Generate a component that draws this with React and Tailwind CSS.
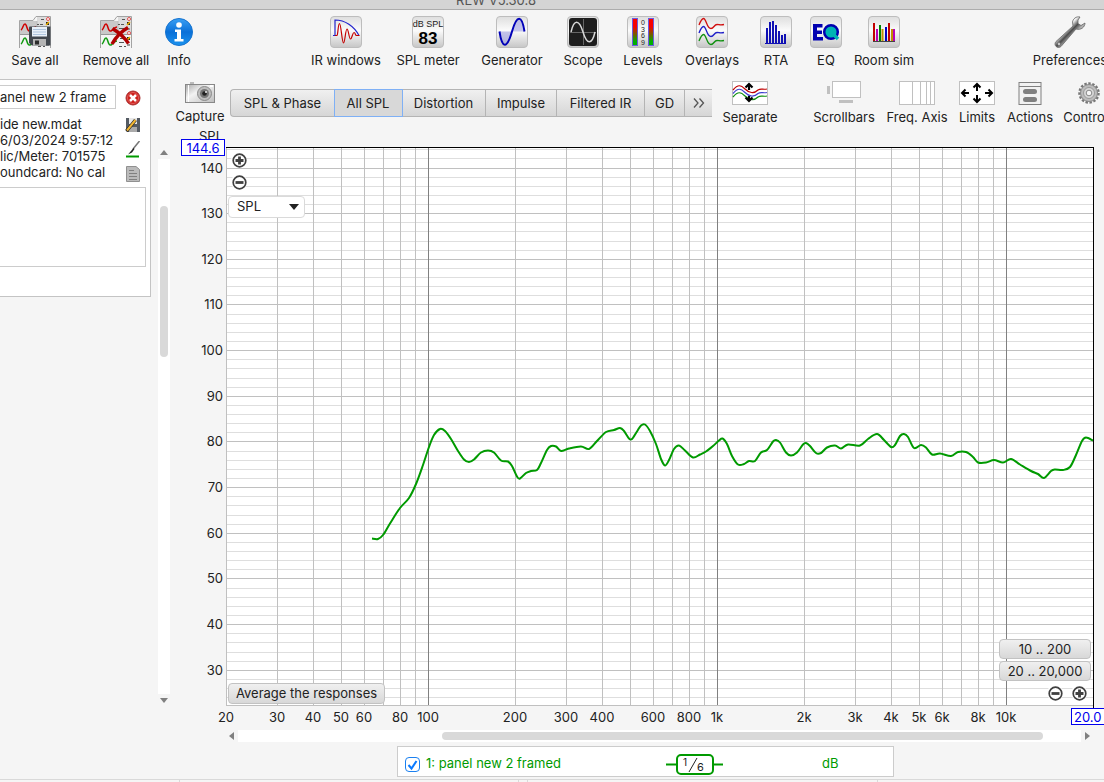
import React, { useState, useLayoutEffect, useRef } from 'react';

const FONT = 'font-["Inter","Liberation_Sans",sans-serif]';

// frequency response, in plot units (867 x 558, origin top left)
const PLOT_W = 867;
const PLOT_H = 558;
const RESPONSE = [
  [145, 391.5], [151, 392], [156, 388], [163, 376.5], [173, 361], [182, 351], [189, 337], [196, 318], [202, 300], [207, 288],
  [213, 282], [218, 284], [224, 292], [231, 304], [237, 312.5], [242, 315], [247, 312.5], [254, 305.5], [261, 303.5], [267, 305.5],
  [274, 313.5], [281, 314.5], [285, 319], [290, 329.5], [293, 331.5], [299, 326], [304, 324], [310, 323], [314, 316], [320, 303],
  [324, 299], [329, 299.5], [334, 304], [342, 301.5], [354, 299.5], [362, 302], [370, 294], [379, 285], [387, 283], [393, 281],
  [397, 284], [402, 291.5], [405, 292], [410, 284.5], [414, 278.5], [418, 277.5], [423, 284], [429, 297], [434, 312], [438, 318.5],
  [442, 313], [447, 302], [452, 298.5], [458, 303.5], [466, 310.5], [473, 307.5], [479, 304.5], [486, 299], [492, 293.5], [495.5, 291.5],
  [500, 297], [505, 309], [511, 317.5], [517, 317], [522, 314], [528, 314], [534, 305.5], [540, 303], [546, 294.5], [549, 293],
  [553, 295.5], [559, 305.5], [564, 308.5], [570, 305.5], [576, 297.5], [579, 296], [583, 299], [589, 306], [594, 306], [600, 300.5],
  [608, 298.5], [614, 301.5], [621, 297.5], [633, 298.5], [641, 292], [650, 287], [657, 293], [664, 300], [668, 298], [673, 289],
  [677, 287], [681, 290], [687, 301], [694, 298], [699, 300.5], [705, 307.5], [713, 306.5], [724, 309], [731, 305], [739, 305],
  [746, 310], [751, 315.5], [759, 315.5], [767, 313], [776, 315.5], [784, 312], [793, 317.5], [804, 324], [811, 327], [817, 331],
  [824, 324], [828, 322.5], [836, 323], [843, 320], [849, 308], [855, 294], [859, 290.5], [866, 293.5]
];

const Y_LABELS = [140, 130, 120, 110, 100, 90, 80, 70, 60, 50, 40, 30];
const X_LABELS = [20, 30, 40, 50, 60, 80, 100, 200, 300, 400, 600, 800, 1000, 2000, 3000, 4000, 5000, 6000, 8000, 10000];
const TOP_DB = 144.6;
const BOTTOM_DB = 22.4;

const curvePath = (pts) => {
  let d = `M${pts[0][0]} ${pts[0][1]}`;
  for (let i = 0; i < pts.length - 1; i++) {
    const a = pts[i - 1] || pts[i];
    const b = pts[i];
    const c = pts[i + 1];
    const e = pts[i + 2] || c;
    d += `C${b[0] + (c[0] - a[0]) / 6} ${b[1] + (c[1] - a[1]) / 6} ${c[0] - (e[0] - b[0]) / 6} ${c[1] - (e[1] - b[1]) / 6} ${c[0]} ${c[1]}`;
  }
  return d;
};

const Tile = ({ children }) => (
  <svg width="32" height="32" viewBox="0 0 32 32">
    <defs>
      <linearGradient id="tile" x1="0" y1="0" x2="0" y2="1">
        <stop offset="0" stopColor="#dedede" />
        <stop offset=".45" stopColor="#fbfbfb" />
        <stop offset="1" stopColor="#c6c6c6" />
      </linearGradient>
    </defs>
    <rect x=".5" y=".5" width="31" height="31" rx="3.5" fill="url(#tile)" stroke="#bdbdbd" />
    {children}
  </svg>
);

const Sheets = () => (
  <>
    <path d="M.5 32V4.500H14L17 .5h14.500V32" fill="#f4f4f4" stroke="#a3a3a3" />
    <path d="M1 5h17v13H1z" fill="#c9c9c9" />
    <path d="M18 1h13v17H18z" fill="#dcdcdc" />
    <path d="M1 18.500h30" stroke="#999" />
    <path d="M18 5v13" stroke="#bbb" />
    <path d="M2 14c2-1 2-6 4-6s2 8 5 7c2-1 3-4 6-4" fill="none" stroke="#d00000" strokeWidth="1.500" />
    <path d="M2 28c2-1 2-6 4-6s2 8 5 7c2-1 3-4 6-4" fill="none" stroke="#109a10" strokeWidth="1.500" />
    <path d="M22 3.500h3M18 8.500h2m1 0h3M19 12.500h5M20 22.500h3M19 26.500h5M19 30.500h3m2 0h2" stroke="#555" />
    <circle cx="29" cy="3" r="1.500" fill="#fff" stroke="#e05050" />
    <circle cx="29" cy="17" r="1.500" fill="#fff" stroke="#e05050" />
    <path d="M27 6h3v3h-3zM27 21h3v3h-3z" fill="#222" />
    <path d="M27 9l3-3M27 24l3-3" stroke="#f4b400" strokeWidth="1.500" />
    <path d="M27 13h3M27 29h3" stroke="#999" strokeWidth="2" />
  </>
);

const SaveAllIcon = () => (
  <svg width="32" height="32" viewBox="0 0 32 32">
    <Sheets />
    <path d="M10 11.500a1 1 0 0 1 1-1h20.500v19H13L10 27z" fill="#41474e" />
    <path d="M13 11h15v9.500H13z" fill="#e9f1fa" />
    <path d="M14 13.500h13M14 16h13M14 18.500h13" stroke="#afc5de" />
    <path d="M14 23h13v6.500H14z" fill="#b5b5b5" />
    <path d="M16 24.500h4v4h-4z" fill="#2c2c2c" />
  </svg>
);

const RemoveAllIcon = () => (
  <svg width="32" height="32" viewBox="0 0 32 32">
    <Sheets />
    <path d="M12.500 12.500C18 16 25 22 28.500 27.500M28 11.500C22 15 16 21 12 28" stroke="#b00000" strokeWidth="3.500" fill="none" />
  </svg>
);

const InfoIcon = () => (
  <svg width="32" height="32" viewBox="0 0 32 32">
    <defs>
      <linearGradient id="info" x1="0" y1="0" x2="0" y2="1">
        <stop offset="0" stopColor="#3aa0f4" />
        <stop offset=".5" stopColor="#0a70d8" />
        <stop offset="1" stopColor="#1b93ee" />
      </linearGradient>
    </defs>
    <circle cx="16" cy="16" r="13.500" fill="url(#info)" stroke="#1673cf" />
    <circle cx="16" cy="9" r="2.800" fill="#fff" />
    <path d="M12 13.500h6v9.500h2.500v2.500h-9V23H14v-7h-2z" fill="#fff" />
  </svg>
);

const IrIcon = () => (
  <Tile>
    <path d="M3 19.500h2V4c10 0 19 6 24 15.500" fill="none" stroke="#2222cc" strokeWidth="1.200" />
    <path d="M5 19.500h2c1 0 1-12 2.500-12S12 27 13.500 27s2-14 3.500-14 2 10 3.500 10 2-6.500 3.500-6.500 1 3 2.500 3h3" fill="none" stroke="#c40000" strokeWidth="1.200" />
  </Tile>
);

const SplIcon = () => (
  <Tile>
    <text x="16" y="11" fontSize="9" textAnchor="middle" fill="#222" fontFamily="Liberation Sans, sans-serif">dB SPL</text>
    <text x="16" y="28" fontSize="17" fontWeight="700" textAnchor="middle" fill="#000" fontFamily="Liberation Sans, sans-serif">83</text>
  </Tile>
);

const GeneratorIcon = () => (
  <Tile>
    <path d="M3 15.500h26C26 0 19 0 16 15.500S6 31 3 15.500" fill="#8f8fe0" opacity=".5" />
    <path d="M3.500 15.500C6 33 11 33 16 15.500S26-1 28.500 15.500" fill="none" stroke="#0000b8" strokeWidth="2" />
  </Tile>
);

const ScopeIcon = () => (
  <Tile>
    <rect x="2" y="2" width="28" height="28" rx="3" fill="#1e1e1e" />
    <path d="M3 16.500h26M16.500 3v26" stroke="#666" />
    <path d="M4 16C7 3 12 3 16 16s9 13 12 0" fill="none" stroke="#d8d8d8" strokeWidth="1.500" />
  </Tile>
);

const LevelsIcon = () => (
  <Tile>
    <defs>
      <linearGradient id="meter" x1="0" y1="0" x2="0" y2="1">
        <stop offset=".3" stopColor="#f80000" />
        <stop offset=".85" stopColor="#00b000" />
      </linearGradient>
    </defs>
    <rect x="5.500" y="2.500" width="5" height="27" fill="url(#meter)" stroke="#6a5be0" />
    <rect x="21.500" y="2.500" width="5" height="27" fill="url(#meter)" stroke="#6a5be0" />
    {['0', '3', '6', '9'].map((n, i) => (
      <text key={n} x="16" y={9 + i * 6.500} fontSize="7" textAnchor="middle" fill="#222" fontFamily="Liberation Sans, sans-serif">{n}</text>
    ))}
  </Tile>
);

const WAVE = 'M3 9C5 4 6 2.500 7.500 2.500c3 0 3 10 7.500 10 3 0 3-4 6-4 2.500 0 3 1 7 0';

const OverlaysIcon = () => (
  <Tile>
    <g fill="none" strokeWidth="1.300">
      <path d={WAVE} stroke="#d01010" />
      <path d={WAVE} transform="translate(0 8)" stroke="#2020c8" />
      <path d={WAVE} transform="translate(0 16)" stroke="#109010" />
    </g>
  </Tile>
);

const RtaIcon = () => (
  <Tile>
    <path d="M6 27V12h2v15zM9 27V6h2v21zM12 27V5h2v22zM15 27V9h2v18zM18 27V15h2v12zM21 27V19h2v8zM24 27V18h2v9z" fill="#1010b4" />
    <path d="M5 27.500h21" stroke="#1010b4" />
  </Tile>
);

const EqIcon = () => (
  <Tile>
    <path d="M3 8h9.500v3.500H7v3h5V18H7v3h6v3.500H3z" fill="#0000b0" />
    <circle cx="21" cy="16" r="6.800" fill="#00b4b4" stroke="#0000b0" strokeWidth="2.500" />
    <path d="M22 17l6 6" stroke="#00b4b4" strokeWidth="3.500" />
  </Tile>
);

const RoomIcon = () => (
  <Tile>
    <path d="M6 7v18M21 7v18" stroke="#c00000" strokeWidth="2" />
    <path d="M9 13v12M26 13v12" stroke="#b800b8" strokeWidth="2" />
    <path d="M12 9v16" stroke="#008000" strokeWidth="2" />
    <path d="M14.500 13v12M24 13v12" stroke="#c09000" strokeWidth="2" />
    <path d="M18 11v14" stroke="#0000c0" strokeWidth="2" />
    <path d="M5 25.500h22" stroke="#444" />
  </Tile>
);

const WrenchIcon = () => (
  <svg width="32" height="32" viewBox="0 0 32 32">
    <defs>
      <linearGradient id="steel" x1="0" y1="0" x2="1" y2="1">
        <stop offset=".38" stopColor="#f4f4f4" />
        <stop offset=".5" stopColor="#4a4a4a" />
        <stop offset=".6" stopColor="#b0b0b0" />
      </linearGradient>
    </defs>
    <path
      d="M26 1c-4-1-7 2-7.500 5l.5 4L2 25.500c-3 3.500 1.500 8 5 5L22 13c5 1.500 9-2 9-6l-4 2.500-3-2L24 4z"
      fill="url(#steel)"
      stroke="#666"
      strokeWidth=".8"
    />
    <circle cx="5" cy="28" r="1.400" fill="#f5f5f5" stroke="#555" strokeWidth=".6" />
  </svg>
);

const CameraIcon = () => (
  <svg width="30" height="22" viewBox="0 0 30 22">
    <defs>
      <linearGradient id="body" x1="0" y1="0" x2="1" y2="1">
        <stop offset="0" stopColor="#aaa" />
        <stop offset=".4" stopColor="#f2f2f2" />
        <stop offset="1" stopColor="#bcbcbc" />
      </linearGradient>
    </defs>
    <path d="M5 0h4v3H5z" fill="#bbb" />
    <rect x=".5" y="2.500" width="29" height="18" fill="url(#body)" stroke="#888" />
    <path d="M3.500 3v17" stroke="#fff" />
    <circle cx="19.500" cy="11.500" r="7" fill="#bdbdbd" stroke="#8a8a8a" />
    <circle cx="19.500" cy="11.500" r="4.500" fill="#777" />
    <circle cx="19.500" cy="11.500" r="2.300" fill="#222" />
    <circle cx="21" cy="10" r="1" fill="#eee" />
    <path d="M25 4h3" stroke="#fff" strokeWidth="2" />
  </svg>
);

const SeparateIcon = () => (
  <svg width="36" height="24" viewBox="0 0 36 24">
    <rect x=".5" y=".5" width="35" height="23" fill="#fff" stroke="#c0c0c0" />
    <g fill="none" strokeWidth="1.200">
      <path d="M1 9c5-6 8-5 12-1s9 5 13 1c3-2 5 0 9-1" stroke="#c00000" />
      <path d="M1 12.500c5-6 8-5 12-1s9 5 13 1c3-2 5 0 9-1" stroke="#4040d0" />
      <path d="M1 16c5-6 8-5 12-1s9 5 13 1c3-2 5 0 9-1" stroke="#109010" />
    </g>
    <path d="M17 3.500V9M17 15v5M13.500 6.500L17 3l3.500 3.500M13.500 16.500L17 20l3.500-3.500" fill="none" stroke="#000" strokeWidth="2.200" />
  </svg>
);

const ScrollbarsIcon = () => (
  <svg width="36" height="24" viewBox="0 0 36 24">
    <rect x="6.500" y=".5" width="28" height="16" fill="#fff" stroke="#c0c0c0" />
    <path d="M1 5h3v8H1zM13 19h14v3H13z" fill="#c0c0c0" />
  </svg>
);

const FreqAxisIcon = () => (
  <svg width="36" height="24" viewBox="0 0 36 24">
    <rect x=".5" y=".5" width="35" height="23" fill="#fff" stroke="#c0c0c0" />
    <path d="M13.500 1v22M21.500 1v22M27.500 1v22M31.500 1v22" stroke="#c0c0c0" />
  </svg>
);

const LimitsIcon = () => (
  <svg width="36" height="24" viewBox="0 0 36 24">
    <rect x=".5" y=".5" width="35" height="23" fill="#fff" stroke="#c0c0c0" />
    <path
      d="M18 3v7M14.500 6.500L18 3l3.500 3.500M18 14v7M14.500 17.500L18 21l3.500-3.500M3 12h7M6.500 8.500L3 12l3.500 3.500M26 12h7M29.500 8.500L33 12l-3.500 3.500"
      fill="none"
      stroke="#000"
      strokeWidth="2"
    />
  </svg>
);

const ActionsIcon = () => (
  <svg width="24" height="24" viewBox="0 0 24 24">
    <rect x="1" y="1.500" width="22" height="22" fill="#f2f2f2" stroke="#808080" />
    <path d="M1 5.500h22" stroke="#808080" />
    <rect x="5" y="8" width="14" height="5" rx="2.500" fill="#808080" />
    <rect x="5" y="16" width="14" height="5" rx="2.500" fill="#808080" />
  </svg>
);

const GearIcon = () => (
  <svg width="24" height="24" viewBox="0 0 24 24">
    <circle cx="12" cy="12" r="9.500" fill="none" stroke="#777" strokeWidth="2.500" strokeDasharray="2.400 1.580" />
    <circle cx="12" cy="12" r="8.500" fill="#bcbcbc" stroke="#888" />
    <circle cx="12" cy="12" r="5.500" fill="#d6d6d6" stroke="#999" />
    <circle cx="12" cy="12" r="2.800" fill="#f5f5f5" stroke="#888" />
  </svg>
);

const toolGroups = [
  [
    { label: 'Save all', icon: SaveAllIcon, width: 'w-[70px]' },
    { label: 'Remove all', icon: RemoveAllIcon, width: 'w-[92px]' },
    { label: 'Info', icon: InfoIcon, width: 'w-[34px]' }
  ],
  [
    { label: 'IR windows', icon: IrIcon, width: 'w-[84px]' },
    { label: 'SPL meter', icon: SplIcon, width: 'w-[80px]' },
    { label: 'Generator', icon: GeneratorIcon, width: 'w-[88px]' },
    { label: 'Scope', icon: ScopeIcon, width: 'w-[54px]' },
    { label: 'Levels', icon: LevelsIcon, width: 'w-[66px]' },
    { label: 'Overlays', icon: OverlaysIcon, width: 'w-[72px]' },
    { label: 'RTA', icon: RtaIcon, width: 'w-[56px]' },
    { label: 'EQ', icon: EqIcon, width: 'w-[44px]' },
    { label: 'Room sim', icon: RoomIcon, width: 'w-[72px]' }
  ]
];

const graphTools = [
  { label: 'Scrollbars', icon: ScrollbarsIcon, width: 'w-[80px]' },
  { label: 'Freq. Axis', icon: FreqAxisIcon, width: 'w-[66px]' },
  { label: 'Limits', icon: LimitsIcon, width: 'w-[54px]' },
  { label: 'Actions', icon: ActionsIcon, width: 'w-[52px]' },
  { label: 'Controls', icon: GearIcon, width: 'w-[66px]' }
];

const tabs = [
  { label: 'SPL & Phase', width: 'w-[104px]' },
  { label: 'All SPL', width: 'w-[67px]' },
  { label: 'Distortion', width: 'w-[84px]' },
  { label: 'Impulse', width: 'w-[71px]' },
  { label: 'Filtered IR', width: 'w-[88px]' },
  { label: 'GD', width: 'w-[40px]' }
];

const ToolButton = ({ label, icon: Icon, width }) => (
  <button type="button" className={`${width} flex flex-col items-center shrink-0 whitespace-nowrap`}>
    <Icon />
    <span className="leading-4 mt-1">{label}</span>
  </button>
);

const ZoomButton = ({ plus, label }) => (
  <button type="button" aria-label={label} className="block bg-white rounded-full">
    <svg width="16" height="16" viewBox="0 0 16 16">
      <circle cx="8.500" cy="8.500" r="6.300" fill="#fff" stroke="#404040" strokeWidth="1.700" />
      <path d={plus ? 'M4.500 8.500h8M8.500 4.500v8' : 'M4.500 8.500h8'} stroke="#404040" strokeWidth="2.800" />
    </svg>
  </button>
);

const Chart = () => {
  const ref = useRef(null);
  const [size, setSize] = useState({ w: 934, h: 600 });

  useLayoutEffect(() => {
    const measure = () => setSize({ w: ref.current.clientWidth, h: ref.current.clientHeight });
    measure();
    window.addEventListener('resize', measure);
    return () => window.removeEventListener('resize', measure);
  }, []);

  const left = 56;
  const top = 20;
  const right = size.w - 11;
  const bottom = size.h - 22;
  const xOf = (f) => Math.round(left + (Math.log10(f / 20) / 3) * (right - left));
  const yOf = (db) => Math.floor(top + ((TOP_DB - db) / (TOP_DB - BOTTOM_DB)) * (bottom - top));

  const freqs = [];
  [10, 100, 1000, 10000].forEach(decade => {
    for (let n = 1; n < 10; n++) {
      const f = decade * n;
      if (f > 20 && f < 20000) freqs.push(f);
    }
  });
  const levels = [];
  for (let db = 144; db > BOTTOM_DB; db -= 2) levels.push(db);

  return (
    <div ref={ref} className="relative flex-1 min-h-0">
      <svg className="block absolute inset-0 w-full h-full text-[13px]" fill="#222">
        <rect x={left} y={top} width={right - left} height={bottom - top} fill="#fff" />
        <g shapeRendering="crispEdges">
          {levels.map(db => (
            <path key={db} d={`M${left} ${yOf(db) + 0.5}H${right}`} stroke={db % 10 ? '#dedede' : '#c0c0c0'} />
          ))}
          {freqs.map(f => (
            <path key={f} d={`M${xOf(f) + 0.5} ${top}V${bottom}`} stroke={[100, 1000, 10000].includes(f) ? '#808080' : '#c0c0c0'} />
          ))}
          <path d={`M${left + 0.5} ${top}V${bottom + 0.5}H${right}`} fill="none" stroke="#c0c0c0" />
          <path d={`M${left} ${top + 0.5}H${right + 0.5}V${bottom + 3}`} fill="none" stroke="#000" />
        </g>
        <svg x={left} y={top} width={right - left} height={bottom - top} viewBox={`-1 0 ${PLOT_W} ${PLOT_H}`} preserveAspectRatio="none">
          <path d={curvePath(RESPONSE)} fill="none" stroke="#009a00" strokeWidth="2" vectorEffect="non-scaling-stroke" />
        </svg>
        <text x="53" y="14" textAnchor="end">SPL</text>
        {Y_LABELS.map(db => (
          <text key={db} x="53" y={yOf(db) + 5} textAnchor="end">{db}</text>
        ))}
        {X_LABELS.map(f => (
          <text key={f} x={xOf(f)} y={size.h - 5} textAnchor="middle">{f >= 1000 ? `${f / 1000}k` : f}</text>
        ))}
      </svg>

      <span className="absolute left-[11px] top-3 w-11 h-[17px] leading-[17px] text-center bg-white border border-[#0000ee] text-[#0000ee]">144.6</span>
      <span className="absolute -right-2 bottom-[2px] w-[41px] h-[17px] leading-[16px] pl-[2px] bg-white border border-[#0000ee] text-[#0000ee]">20.0</span>

      <div className="absolute left-[58px] top-[25px] flex flex-col items-start gap-[6px]">
        <div className="flex flex-col gap-[6px] ml-[3px]">
          <ZoomButton plus label="Zoom in level" />
          <ZoomButton label="Zoom out level" />
        </div>
        <div className="relative">
          <select aria-label="Y axis" className="block appearance-none w-[77px] h-[22px] pl-2 bg-white border border-[#dadada] rounded">
            <option>SPL</option>
          </select>
          <svg className="absolute right-[6px] top-2 pointer-events-none" width="10" height="6"><path d="M0 0h10L5 6z" fill="#222" /></svg>
        </div>
      </div>

      <button type="button" className="absolute left-[58px] bottom-[23px] w-[157px] h-[21px] leading-[19px] rounded border border-[#c2c2c2] bg-linear-to-b from-[#f0f0f0] to-[#d8d8d8] whitespace-nowrap">
        Average the responses
      </button>

      <div className="absolute right-[13px] bottom-[26px] w-[92px] flex flex-col gap-[2px]">
        <button type="button" className="h-5 leading-[18px] rounded border border-[#c2c2c2] bg-linear-to-b from-[#f0f0f0] to-[#d8d8d8]">10 .. 200</button>
        <button type="button" className="h-5 leading-[18px] rounded border border-[#c2c2c2] bg-linear-to-b from-[#f0f0f0] to-[#d8d8d8] whitespace-nowrap">20 .. 20,000</button>
        <div className="flex justify-end gap-2 pr-1 pt-[2px]">
          <ZoomButton label="Zoom out frequency" />
          <ZoomButton plus label="Zoom in frequency" />
        </div>
      </div>
    </div>
  );
};

const MeasurementCard = () => (
  <div className="w-[151px] h-[218px] mt-1 shrink-0 flex flex-col bg-white border border-l-0 border-[#c4c4c4]">
    <div className="flex justify-between pt-[5px] pr-[9px]">
      <div className="w-[116px] overflow-hidden whitespace-nowrap">
        <input
          aria-label="Measurement name"
          defaultValue="anel new 2 frame"
          className="block w-full h-6 mb-[7px] border border-l-0 border-[#ccc] bg-white outline-none"
        />
        <p className="leading-4">ide new.mdat</p>
        <p className="leading-4">6/03/2024 9:57:12</p>
        <p className="leading-4">lic/Meter: 701575</p>
        <p className="leading-4">oundcard: No cal</p>
      </div>
      <div className="flex flex-col items-center gap-2 pt-[5px]">
        <button type="button" aria-label="Remove">
          <svg className="block" width="16" height="16" viewBox="0 0 16 16">
            <circle cx="8" cy="8" r="7" fill="#cc1f1a" stroke="#a33" />
            <circle cx="8" cy="8" r="5.500" fill="none" stroke="#e88" strokeWidth=".6" />
            <path d="M5 5l6 6M11 5l-6 6" stroke="#fff" strokeWidth="2.500" />
          </svg>
        </button>
        <button type="button" aria-label="Save" className="mt-[3px]">
          <svg className="block" width="16" height="16" viewBox="0 0 16 16">
            <path d="M1 1h14v14H2l-1-1z" fill="#555b63" />
            <path d="M4 1h8v6H4z" fill="#e8e8e8" />
            <path d="M4 10h8v5H4z" fill="#aaa" />
            <path d="M1.500 14L10.500 3" stroke="#222" strokeWidth="3.500" />
            <path d="M2 13.500L10.500 3" stroke="#f2b632" strokeWidth="2" />
          </svg>
        </button>
        <button type="button" aria-label="Trace colour">
          <svg className="block" width="16" height="17" viewBox="0 0 16 17">
            <path d="M14.500 0L8 8" stroke="#777" strokeWidth="1.500" />
            <path d="M8.500 7L3 13.500 7 11.500 9.500 8z" fill="#222" />
            <path d="M1 15.500h13" stroke="#009a00" strokeWidth="2" />
          </svg>
        </button>
        <button type="button" aria-label="Notes">
          <svg className="block" width="16" height="16" viewBox="0 0 16 16">
            <path d="M1.500 .5H11l3.500 3v12h-13z" fill="#bbb" stroke="#909090" />
            <path d="M4 4.500h5M4 7.500h8M4 10.500h8M4 13.500h8" stroke="#808080" />
          </svg>
        </button>
      </div>
    </div>
    <textarea aria-label="Measurement notes" className="block w-[146px] h-20 mt-[5px] resize-none border border-l-0 border-[#ccc] outline-none" />
  </div>
);

const App = () => {
  const [active, setActive] = useState('All SPL');
  const [shown, setShown] = useState(true);

  return (
    <div className={`${FONT} h-screen flex flex-col overflow-hidden bg-[#f5f5f5] text-[13px] text-[#222]`}>
      <header className="h-[10px] shrink-0 flex items-end justify-center pr-28 pb-px overflow-hidden bg-[#d4d4d4] border-b border-[#acacac]">
        <h1 className="leading-4 text-[#555]">REW V5.30.8</h1>
      </header>

      <nav className="h-[65px] shrink-0 flex items-start pt-[6px]">
        {toolGroups.map((group, index) => (
          <div key={index} className={index === 0 ? 'flex' : 'flex ml-[108px]'}>
            {group.map(tool => <ToolButton key={tool.label} {...tool} />)}
          </div>
        ))}
        <div className="ml-auto -mr-[6px]">
          <ToolButton label="Preferences" icon={WrenchIcon} width="w-[80px]" />
        </div>
      </nav>

      <div className="flex-1 min-h-0 flex">
        <aside className="w-[170px] shrink-0 flex justify-between items-start">
          <MeasurementCard />
          <div className="w-3 self-stretch flex flex-col items-center gap-1 pt-[75px] pb-[76px]">
            <svg width="8" height="5" className="shrink-0"><path d="M0 5h8L4 0z" fill="#808080" /></svg>
            <div className="flex-1 w-3 bg-white pt-[47px] flex justify-center">
              <div className="w-2 h-[151px] rounded-full bg-[#d9d9d9]"></div>
            </div>
            <svg width="8" height="5" className="shrink-0"><path d="M0 0h8L4 5z" fill="#808080" /></svg>
          </div>
        </aside>

        <main className="flex-1 min-w-0 flex flex-col">
          <div className="h-[52px] shrink-0 flex items-start">
            <button type="button" className="w-[60px] shrink-0 flex flex-col items-center pt-[7px]">
              <CameraIcon />
              <span className="leading-4 mt-1">Capture</span>
            </button>
            <div role="tablist" className="h-7 mt-[14px] shrink-0 flex rounded-l border border-r-0 border-[#b4b4b4] bg-linear-to-b from-[#f0f0f0] to-[#d6d6d6]">
              {tabs.map(tab => (
                <button
                  key={tab.label}
                  type="button"
                  role="tab"
                  aria-selected={active === tab.label}
                  onClick={() => setActive(tab.label)}
                  className={`${tab.width} pt-[2px] whitespace-nowrap border-r ${active === tab.label ? 'bg-[#d8d8d8] outline outline-[#7fb0f5] border-transparent' : 'border-[#b4b4b4]'}`}
                >
                  {tab.label}
                </button>
              ))}
              <button type="button" aria-label="More graphs" className="w-[27px] flex items-center justify-center">
                <svg width="12" height="10" fill="none" stroke="#555" strokeWidth="1.300"><path d="M1 .5L5 5 1 9.500M6.500 .5l4 4.500-4 4.500" /></svg>
              </button>
            </div>
            <div className="flex pt-[6px] ml-px">
              <ToolButton label="Separate" icon={SeparateIcon} width="w-[74px]" />
            </div>
            <div className="flex pt-[6px] ml-auto -mr-[18px]">
              {graphTools.map(tool => <ToolButton key={tool.label} {...tool} />)}
            </div>
          </div>

          <Chart />

          <div className="h-3 mt-[3px] shrink-0 flex items-center gap-1 pl-[59px] pr-[14px]">
            <svg width="5" height="8" className="shrink-0"><path d="M5 0v8L0 4z" fill="#808080" /></svg>
            <div className="flex-1 h-3 flex items-center bg-white pl-[204px] pr-[38px]">
              <div className="flex-1 h-2 rounded-full bg-[#d9d9d9]"></div>
            </div>
            <svg width="5" height="8" className="shrink-0"><path d="M0 0v8l5-4z" fill="#808080" /></svg>
          </div>

          <div className="mt-1 mb-[2px] ml-[227px] w-[497px] h-[31px] pt-[5px] shrink-0 flex items-center bg-white border border-[#ccc] text-[#009a00]">
            <label className="flex items-center gap-[6px] pl-[7px] w-[268px]">
              <span className="relative w-[15px] h-[15px]">
                <input
                  type="checkbox"
                  checked={shown}
                  onChange={() => setShown(!shown)}
                  className="block appearance-none w-[15px] h-[15px] rounded border border-[#1a80f0] bg-white"
                />
                {shown && (
                  <svg className="absolute inset-0 pointer-events-none" width="15" height="15"><path d="M3.500 8l3 3.500 5-7.500" fill="none" stroke="#0a7aff" strokeWidth="2" /></svg>
                )}
              </span>
              1: panel new 2 framed
            </label>
            <button type="button" aria-label="Smoothing 1/6 octave">
              <svg className="block" width="58" height="21" viewBox="0 0 58 21">
                <path d="M0 10.500h10M47 10.500h10" stroke="#009a00" strokeWidth="2" />
                <rect x="11" y="1" width="36" height="19" rx="4" fill="#fff" stroke="#009a00" strokeWidth="2" />
                <path d="M23 18l8-14" stroke="#222" />
                <text x="17" y="12" fontSize="10" fill="#222">1</text>
                <text x="31" y="17" fontSize="11" fill="#222">6</text>
              </svg>
            </button>
            <span className="pl-[98px]">dB</span>
          </div>
        </main>
      </div>

      <footer className="h-[3px] shrink-0 flex border-t border-[#d9d9d9]">
        <div className="w-[180px] border-r border-[#d9d9d9]"></div>
        <div className="w-[339px] border-r border-[#d9d9d9]"></div>
        <div className="w-[9px] border-r border-[#d9d9d9]"></div>
        <div className="w-[350px] border-r border-[#d9d9d9]"></div>
      </footer>
    </div>
  );
};

export default App;
